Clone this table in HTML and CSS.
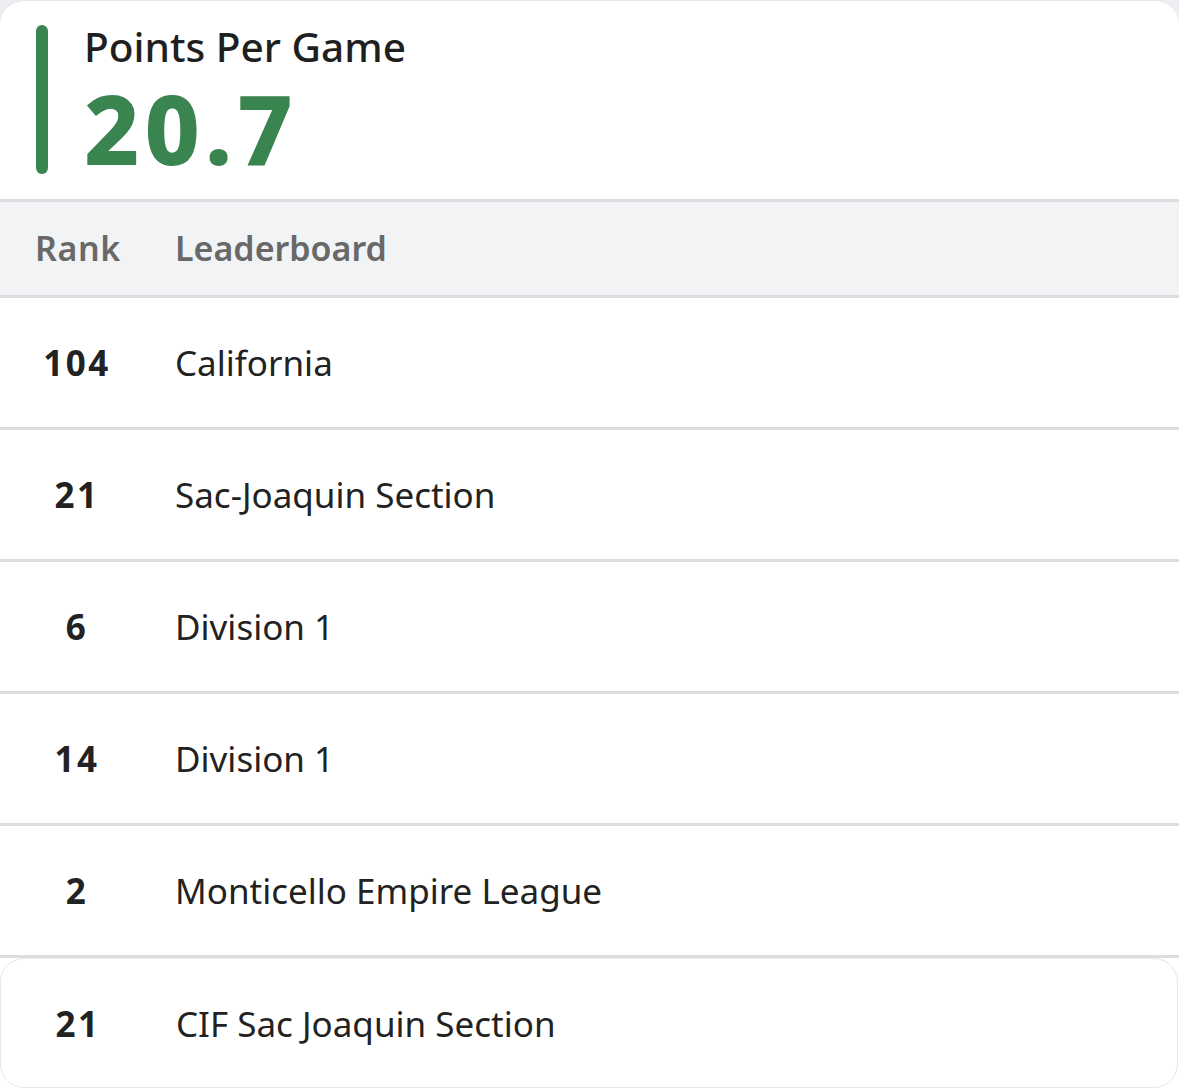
FILE: index.html
```html
<!DOCTYPE html>
<html lang="en">
<head>
<meta charset="utf-8">
<title>Points Per Game</title>
<link rel="stylesheet" href="styles.css">
</head>
<body>
<div class="page">
  <section class="card">
    <div class="stat">
      <div class="stat-bar"></div>
      <div class="stat-text">
        <div class="stat-label">Points Per Game</div>
        <div class="stat-value">20.7</div>
      </div>
    </div>
    <div class="table">
      <div class="row head">
        <div class="rank">Rank</div>
        <div class="name">Leaderboard</div>
      </div>
      <div class="row">
        <div class="rank">104</div>
        <div class="name">California</div>
      </div>
      <div class="row">
        <div class="rank">21</div>
        <div class="name">Sac-Joaquin Section</div>
      </div>
      <div class="row">
        <div class="rank">6</div>
        <div class="name">Division 1</div>
      </div>
      <div class="row">
        <div class="rank">14</div>
        <div class="name">Division 1</div>
      </div>
      <div class="row">
        <div class="rank">2</div>
        <div class="name">Monticello Empire League</div>
      </div>
    </div>
  </section>
  <section class="card-last">
    <div class="row last">
      <div class="rank">21</div>
      <div class="name">CIF Sac Joaquin Section</div>
    </div>
  </section>
</div>
</body>
</html>
```
FILE: styles.css
```css
html, body {
  margin: 0;
  padding: 0;
}
body {
  background: #eceef1;
  font-family: "Noto Sans", "Open Sans", sans-serif;
  color: #222222;
  width: 1179px;
  height: 1088px;
  overflow: hidden;
}
.page {
  display: flex;
  flex-direction: column;
}
.card {
  background: #ffffff;
  border-radius: 24px 24px 0 0;
  border-top: 1px solid #e4e6e9;
}
.stat {
  display: flex;
  align-items: flex-start;
  height: 198px;
  box-sizing: border-box;
  padding: 21px 0 0 36px;
}
.stat-bar {
  width: 12px;
  height: 149px;
  margin-top: 3px;
  border-radius: 6px;
  background: #3a8450;
  flex: none;
}
.stat-text {
  margin-left: 36px;
  display: flex;
  flex-direction: column;
}
.stat-label {
  font-size: 40.6px;
  font-weight: 500;
  line-height: 50px;
  color: #1f1f1f;
}
.stat-value {
  margin-top: 8px;
  font-size: 96px;
  font-weight: 800;
  line-height: 96px;
  color: #3a8450;
  letter-spacing: 5px;
}
.table {
  display: flex;
  flex-direction: column;
}
.row {
  display: flex;
  align-items: center;
  height: 129px;
  border-top: 3px solid #dcdde0;
  font-size: 35px;
}
.row .rank {
  width: 152px;
  flex: none;
  text-align: center;
  font-weight: 700;
  letter-spacing: 2.5px;
  padding-left: 2px;
  box-sizing: border-box;
}
.row .name {
  margin-left: 23px;
}
.row.head {
  height: 96px;
  box-sizing: border-box;
  padding-bottom: 2px;
  background: #f1f3f5;
  color: #686868;
  font-weight: 600;
  font-size: 34px;
}
.row.head .rank {
  font-weight: 600;
  letter-spacing: 0.6px;
  padding-left: 4px;
}
.card-last {
  background: #ffffff;
  border-top: 3px solid #dcdde0;
}
.card-last .row.last {
  border: 1px solid #e6e8eb;
  border-radius: 24px;
  background: #ffffff;
  height: 128px;
  margin-right: 1px;
}
```
